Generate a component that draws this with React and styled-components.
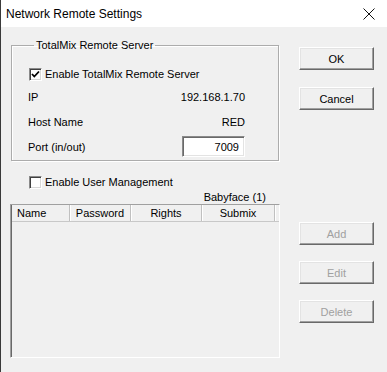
import styled, { createGlobalStyle } from 'styled-components';

const GlobalStyle = createGlobalStyle`
  html, body {
    margin: 0;
    padding: 0;
    background: #f0f0f0;
  }
  body {
    font-family: "Liberation Sans", Arial, sans-serif;
    font-size: 11px;
    color: #000;
  }
`;

const Window = styled.div`
  width: 387px;
  height: 372px;
  box-sizing: border-box;
  border-left: 1px solid #3a3a3a;
  background: #f0f0f0;
  display: flex;
  flex-direction: column;
  overflow: hidden;
`;

const TitleBar = styled.div`
  height: 27px;
  flex: none;
  background: #fff;
  display: flex;
  align-items: center;
  justify-content: space-between;
  padding: 0 12px 0 5px;
  font-size: 12px;
`;

const Body = styled.div`
  display: flex;
  padding: 11px 0 0 9px;
`;

const LeftColumn = styled.div`
  width: 270px;
  display: flex;
  flex-direction: column;
`;

const RightColumn = styled.div`
  margin-left: 19px;
  width: 75px;
  display: flex;
  flex-direction: column;
`;

const GroupBox = styled.fieldset`
  margin: 0 1px;
  padding: 0 33px 3px 16px;
  border: 1px solid #acacac;
  box-shadow: inset 1px 1px #fff, 1px 1px #fff;
  display: flex;
  flex-direction: column;
`;

const Legend = styled.legend`
  margin-left: 6px;
  padding: 0 2px;
  line-height: 14px;
`;

const Row = styled.div`
  display: flex;
  align-items: center;
  justify-content: space-between;
  height: ${(p) => p.$h || 14}px;
  margin-top: ${(p) => p.$top || 0}px;
  padding-left: ${(p) => p.$indent || 0}px;
`;

const CheckLabel = styled.label`
  display: flex;
  align-items: center;
  gap: 3px;
  line-height: 13px;
`;

const Box = styled.span`
  width: 13px;
  height: 13px;
  box-sizing: border-box;
  background: #fff;
  border: 1px solid;
  border-color: #8a8a8a #fff #fff #8a8a8a;
  box-shadow: inset 1px 1px #404040, inset -1px -1px #d8d8d8;
  display: inline-flex;
  align-items: center;
  justify-content: center;
`;

const Field = styled.div`
  width: 63px;
  height: 21px;
  box-sizing: border-box;
  background: #fff;
  border: 1px solid;
  border-color: #8a8a8a #fff #fff #8a8a8a;
  box-shadow: inset 1px 1px #696969, inset -1px -1px #e3e3e3;
  display: flex;
  align-items: center;
  justify-content: flex-end;
  padding-right: 5px;
`;

const Caption = styled.div`
  margin-top: 1px;
  height: 14px;
  line-height: 14px;
  text-align: right;
  padding-right: 14px;
`;

const ListView = styled.div`
  height: 154px;
  box-sizing: border-box;
  border: 1px solid;
  border-color: #a0a0a0 #fff #fff #a0a0a0;
  box-shadow: inset 1px 0 #696969;
  padding-left: 1px;
`;

const Header = styled.div`
  display: flex;
  height: 16px;
  border-bottom: 1px solid #c8c8c8;
`;

const HeaderCell = styled.div`
  width: ${(p) => p.$w}px;
  flex: none;
  box-sizing: border-box;
  border-right: 1px solid #c0c0c0;
  box-shadow: 1px 0 #fff;
  line-height: 16px;
  text-align: ${(p) => (p.$left ? 'left' : 'center')};
  padding-left: ${(p) => (p.$left ? 5 : 0)}px;
`;

const Button = styled.button`
  width: 75px;
  height: 23px;
  margin-top: ${(p) => p.$top}px;
  padding: 0;
  font: inherit;
  color: ${(p) => (p.disabled ? '#a0a0a0' : '#000')};
  background: #f0f0f0;
  border: 1px solid;
  border-color: #fff #696969 #696969 #fff;
  box-shadow: inset -1px -1px #a0a0a0, inset 1px 1px #e3e3e3;
`;

const CheckMark = () => (
  <svg width="9" height="9" viewBox="0 0 9 9">
    <path d="M1 4 L3.3 6.5 L8 1.5" fill="none" stroke="#000" strokeWidth="1.8" />
  </svg>
);

const CloseIcon = () => (
  <svg width="12" height="12" viewBox="0 0 12 12">
    <path d="M0.5 0.5 L11.5 11.5 M11.5 0.5 L0.5 11.5" stroke="#111" strokeWidth="1" />
  </svg>
);

const App = () => {
  return (
    <Window>
      <GlobalStyle />
      <TitleBar>
        <span>Network Remote Settings</span>
        <CloseIcon />
      </TitleBar>
      <Body>
        <LeftColumn>
          <GroupBox>
            <Legend>TotalMix Remote Server</Legend>
            <Row $h={13} $top={16} $indent={1}>
              <CheckLabel>
                <Box>
                  <CheckMark />
                </Box>
                Enable TotalMix Remote Server
              </CheckLabel>
            </Row>
            <Row $top={9}>
              <span>IP</span>
              <span>192.168.1.70</span>
            </Row>
            <Row $top={11}>
              <span>Host Name</span>
              <span>RED</span>
            </Row>
            <Row $h={21} $top={7}>
              <span>Port (in/out)</span>
              <Field>7009</Field>
            </Row>
          </GroupBox>
          <Row $h={13} $top={15} $indent={19}>
            <CheckLabel>
              <Box />
              Enable User Management
            </CheckLabel>
          </Row>
          <Caption>Babyface (1)</Caption>
          <ListView>
            <Header>
              <HeaderCell $w={58} $left>Name</HeaderCell>
              <HeaderCell $w={61}>Password</HeaderCell>
              <HeaderCell $w={71}>Rights</HeaderCell>
              <HeaderCell $w={73}>Submix</HeaderCell>
            </Header>
          </ListView>
        </LeftColumn>
        <RightColumn>
          <Button $top={9}>OK</Button>
          <Button $top={17}>Cancel</Button>
          <Button $top={112} disabled>Add</Button>
          <Button $top={16} disabled>Edit</Button>
          <Button $top={16} disabled>Delete</Button>
        </RightColumn>
      </Body>
    </Window>
  );
};

export default App;
